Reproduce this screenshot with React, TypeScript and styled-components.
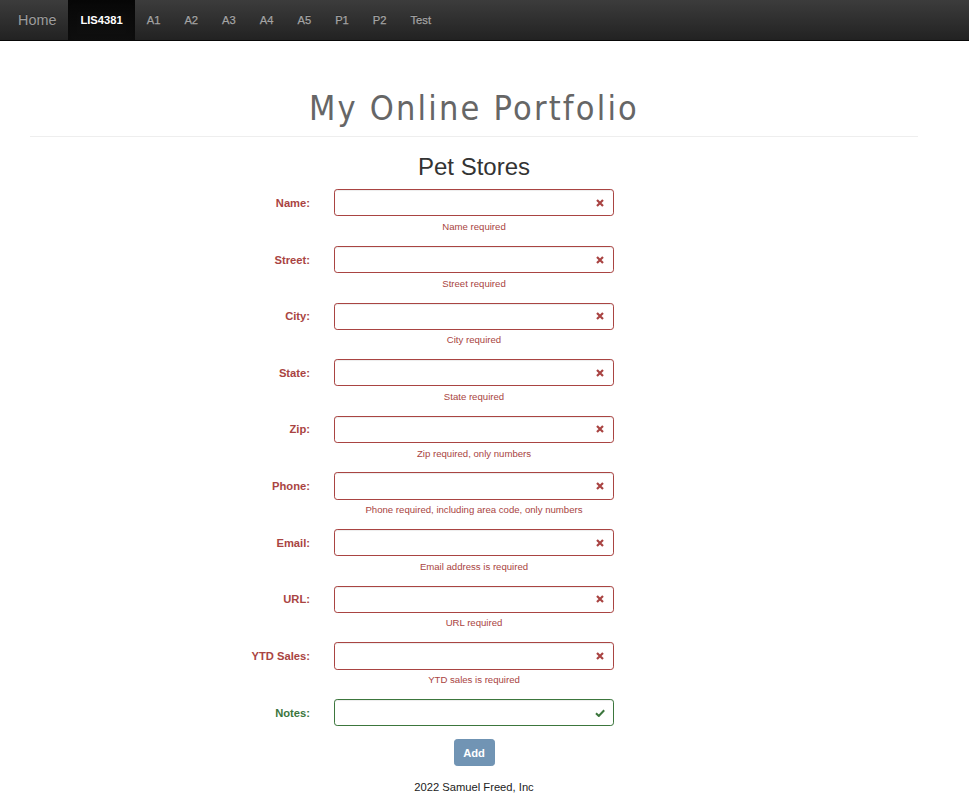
import React from "react";
import styled, { createGlobalStyle } from "styled-components";

const GlobalStyle = createGlobalStyle`
  html, body {
    margin: 0;
    padding: 0;
    background: #ffffff;
  }
  body {
    font-family: "Liberation Sans", Arial, sans-serif;
    color: #333333;
    font-size: 11.2px;
  }
  * { box-sizing: border-box; }
`;

const Page = styled.div`
  display: flex;
  flex-direction: column;
  min-height: 803px;
`;

const NavBar = styled.nav`
  height: 41px;
  display: flex;
  align-items: stretch;
  padding-left: 6px;
  background-image: linear-gradient(to bottom, #3c3c3c 0%, #222222 100%);
  border-bottom: 1px solid #080808;
`;

const Brand = styled.a`
  display: flex;
  align-items: center;
  padding: 0 12px;
  font-size: 14.4px;
  color: #9d9d9d;
  text-decoration: none;
  text-shadow: 0 -1px 0 rgba(0, 0, 0, 0.25);
`;

const NavList = styled.ul`
  display: flex;
  margin: 0;
  padding: 0;
  list-style: none;
`;

const NavLink = styled.a<{ $active?: boolean }>`
  display: flex;
  align-items: center;
  height: 40px;
  padding: 0 12px;
  font-size: 11.2px;
  font-weight: ${(p) => (p.$active ? "bold" : "normal")};
  text-decoration: none;
  color: ${(p) => (p.$active ? "#ffffff" : "#a4a4a4")};
  background-image: ${(p) =>
    p.$active ? "linear-gradient(to bottom, #080808 0%, #0f0f0f 100%)" : "none"};
  box-shadow: ${(p) => (p.$active ? "inset 0 3px 9px rgba(0,0,0,0.25)" : "none")};
  text-shadow: 0 -1px 0 rgba(0, 0, 0, 0.25);
  -webkit-text-stroke: ${(p) => (p.$active ? "0" : "0.25px #a4a4a4")};
`;

const Main = styled.main`
  display: flex;
  flex-direction: column;
  padding: 0 51px 0 30px;
`;

const Title = styled.h1`
  margin: 48.5px 0 0;
  text-align: center;
  font-family: "DejaVu Sans Condensed", "DejaVu Sans", sans-serif;
  font-weight: normal;
  font-size: 34px;
  line-height: 1.1;
  letter-spacing: 2.2px;
  color: #666666;
`;

const Rule = styled.hr`
  margin: 9.5px 0 0;
  border: 0;
  border-top: 1px solid #eeeeee;
`;

const SubTitle = styled.h2`
  margin: 17px 0 0;
  text-align: center;
  font-weight: normal;
  font-size: 24px;
  line-height: 1.1;
  color: #333333;
`;

const Form = styled.form`
  display: flex;
  flex-direction: column;
  margin-top: 8.5px;
`;

const Row = styled.div`
  display: grid;
  grid-template-columns: 280px 280px;
  column-gap: 24px;
  align-items: start;
  margin-bottom: 12.37px;
`;

const Label = styled.label<{ $ok?: boolean }>`
  height: 27.2px;
  display: flex;
  align-items: center;
  justify-content: flex-end;
  font-weight: bold;
  font-size: 11.2px;
  color: ${(p) => (p.$ok ? "#3c763d" : "#a94442")};
`;

const Field = styled.div`
  display: flex;
  flex-direction: column;
`;

const InputWrap = styled.div`
  position: relative;
  height: 27.2px;
`;

const Input = styled.input<{ $ok?: boolean }>`
  display: block;
  width: 100%;
  height: 27.2px;
  padding: 4.8px 27px 4.8px 9.6px;
  font-family: "Liberation Sans", Arial, sans-serif;
  font-size: 11.2px;
  color: #555555;
  background: #ffffff;
  border: 1px solid ${(p) => (p.$ok ? "#3c763d" : "#a94442")};
  border-radius: 3.2px;
  box-shadow: inset 0 1px 1px rgba(0, 0, 0, 0.075);
  outline: none;
`;

const Feedback = styled.span`
  position: absolute;
  top: 0;
  right: 0;
  width: 27.2px;
  height: 27.2px;
  display: flex;
  align-items: center;
  justify-content: center;
  pointer-events: none;
`;

const Help = styled.span`
  display: block;
  margin-top: 3.5px;
  text-align: center;
  font-size: 9.6px;
  line-height: 13.6px;
  color: #a94442;
`;

const ButtonRow = styled.div`
  display: flex;
  justify-content: center;
  margin-top: 0.63px;
`;

const Button = styled.button`
  width: 41px;
  height: 27px;
  padding: 0;
  border: 1px solid #6f93b3;
  border-radius: 3.2px;
  background: #7194b4;
  color: #ffffff;
  font-family: "Liberation Sans", Arial, sans-serif;
  font-weight: bold;
  font-size: 11.2px;
`;

const Footer = styled.footer`
  margin-top: 12.5px;
  text-align: center;
  font-size: 11.2px;
  line-height: 16px;
  color: #222222;
`;

const RemoveIcon = () => (
  <svg width="8" height="8" viewBox="0 0 8 8" aria-hidden="true">
    <path d="M1 1 L7 7 M7 1 L1 7" stroke="#a94442" strokeWidth="2.2" strokeLinecap="butt" />
  </svg>
);

const OkIcon = () => (
  <svg width="10" height="8" viewBox="0 0 10 8" aria-hidden="true">
    <path d="M1 4.2 L3.8 7 L9.2 1.2" stroke="#3c763d" strokeWidth="2" fill="none" />
  </svg>
);

const navItems = ["A1", "A2", "A3", "A4", "A5", "P1", "P2", "Test"];

const fields: { label: string; help?: string; ok?: boolean }[] = [
  { label: "Name:", help: "Name required" },
  { label: "Street:", help: "Street required" },
  { label: "City:", help: "City required" },
  { label: "State:", help: "State required" },
  { label: "Zip:", help: "Zip required, only numbers" },
  { label: "Phone:", help: "Phone required, including area code, only numbers" },
  { label: "Email:", help: "Email address is required" },
  { label: "URL:", help: "URL required" },
  { label: "YTD Sales:", help: "YTD sales is required" },
  { label: "Notes:", ok: true },
];

export default function App() {
  return (
    <>
      <GlobalStyle />
      <Page>
        <NavBar>
          <Brand href="#">Home</Brand>
          <NavList>
            <li>
              <NavLink href="#" $active>
                LIS4381
              </NavLink>
            </li>
            {navItems.map((n) => (
              <li key={n}>
                <NavLink href="#">{n}</NavLink>
              </li>
            ))}
          </NavList>
        </NavBar>
        <Main>
          <Title>My Online Portfolio</Title>
          <Rule />
          <SubTitle>Pet Stores</SubTitle>
          <Form onSubmit={(e) => e.preventDefault()}>
            {fields.map((f) => (
              <Row key={f.label}>
                <Label $ok={f.ok}>{f.label}</Label>
                <Field>
                  <InputWrap>
                    <Input type="text" $ok={f.ok} />
                    <Feedback>{f.ok ? <OkIcon /> : <RemoveIcon />}</Feedback>
                  </InputWrap>
                  {f.help && <Help>{f.help}</Help>}
                </Field>
              </Row>
            ))}
            <ButtonRow>
              <Button type="submit">Add</Button>
            </ButtonRow>
          </Form>
          <Footer>2022 Samuel Freed, Inc</Footer>
        </Main>
      </Page>
    </>
  );
}
